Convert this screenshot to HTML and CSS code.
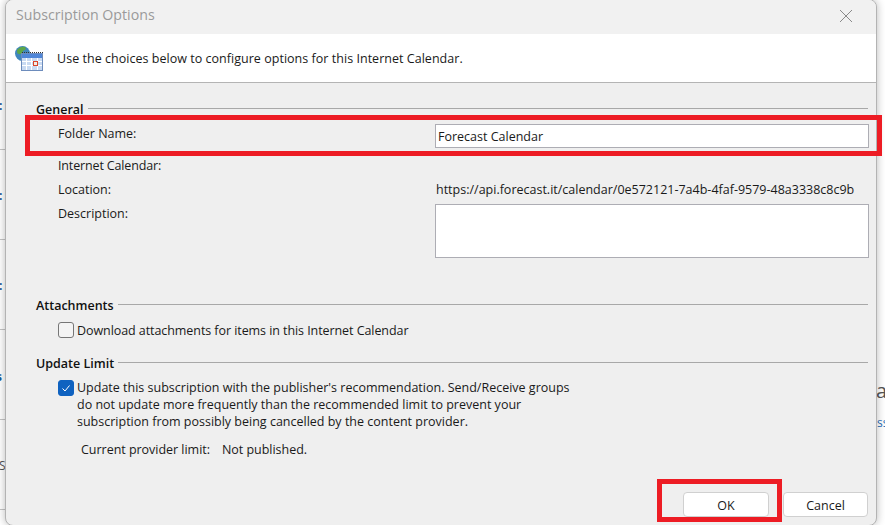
FILE: index.html
```html
<!DOCTYPE html>
<html lang="en">
<head>
  <meta charset="UTF-8">
  <title>Subscription Options</title>
  <link rel="stylesheet" href="styles.css">
</head>
<body>
  <!-- app window behind the dialog -->
  <div class="behind">
    <span class="frag c1">:</span>
    <span class="frag c2">:</span>
    <span class="frag c3">:</span>
    <span class="frag blue-s">s</span>
    <span class="frag grey-s">S</span>
    <span class="frag big-a">a</span>
    <span class="frag link-s">ss</span>
    <i class="rule r0"></i>
    <i class="rule r1"></i>
    <i class="rule r2"></i>
    <i class="rule r3"></i>
    <i class="rule r4"></i>
    <i class="rule r5"></i>
  </div>

  <div class="dialog">
    <div class="titlebar">
      <span class="title">Subscription Options</span>
      <svg class="close" width="14" height="14" viewBox="0 0 14 14"><path d="M1 1l12 12M13 1L1 13" stroke="#8a8a8a" stroke-width="1" fill="none"/></svg>
    </div>

    <div class="banner">
      <svg class="cal" width="28" height="25" viewBox="0 0 28 25">
        <circle cx="7.500" cy="7.500" r="7.500" fill="#3f86bd"/>
        <path d="M2 4c2-3 6-4 8-3 2 2 0 3-2 4-1 2-2 4-4 3-2 0-2-2-2-4z" fill="#5da648"/>
        <rect x="6.500" y="7.500" width="21" height="17" fill="#c9daf2" stroke="#6d8cbc"/>
        <rect x="7" y="8" width="20" height="4" fill="#4f86d8"/>
        <path d="M7 6.500h21" stroke="#333" stroke-dasharray="1 1"/>
        <path d="M7 15.500h20M7 19.500h20M11.500 12v12M16.500 12v12M22.500 12v12" stroke="#fff"/>
        <rect x="18.500" y="15.500" width="4" height="4" fill="#f5ebe2" stroke="#d9452b"/>
      </svg>
      <span>Use the choices below to configure options for this Internet Calendar.</span>
    </div>

    <div class="body">
      <div class="group-head first"><b>General</b><i></i></div>
      <div class="field-row name-row">
        <label>Folder Name:</label>
        <div class="input">Forecast Calendar</div>
      </div>
      <div class="field-row plain calendar-row"><label>Internet Calendar:</label></div>
      <div class="field-row plain"><label>Location:</label><span class="value">https://api.forecast.it/calendar/0e572121-7a4b-4faf-9579-48a3338c8c9b</span></div>
      <div class="field-row desc-row">
        <label>Description:</label>
        <div class="input area"></div>
      </div>

      <div class="group-head attach"><b>Attachments</b><i></i></div>
      <div class="check-row">
        <span class="check"></span>
        <span class="download">Download attachments for items in this Internet Calendar</span>
      </div>

      <div class="group-head update"><b>Update Limit</b><i></i></div>
      <div class="check-row">
        <span class="check on">
          <svg width="12" height="12" viewBox="0 0 12 12"><path d="M2.500 6.500l2.500 2.500 4.500-5.500" stroke="#fff" stroke-width="1" fill="none"/></svg>
        </span>
        <span class="long">Update this subscription with the publisher's recommendation. Send/Receive groups<br>do not update more frequently than the recommended limit to prevent your<br>subscription from possibly being cancelled by the content provider.</span>
      </div>
      <div class="provider"><span>Current provider limit:</span><span>Not published.</span></div>
    </div>

    <div class="buttons">
      <button class="ok">OK</button>
      <button class="cancel">Cancel</button>
    </div>
  </div>

  <!-- red annotation boxes -->
  <div class="mark mark-name"></div>
  <div class="mark mark-ok"></div>
</body>
</html>
```

FILE: styles.css
```css
html, body {
  width: 100%;
  height: 100%;
  padding: 0;
  margin: 0;
}

body {
  position: relative;
  overflow: hidden;
  background: #fff;
  font-family: "Open Sans", "Noto Sans", sans-serif;
  font-size: 12.5px;
  color: #1a1a1a;
}

/* stuff behind the dialog */
.frag {
  position: absolute;
  font-weight: 700;
  color: #1a5a9a;
  font-size: 12px;
  line-height: 14px;
}
.c1 { left: -1px; top: 99px; }
.c2 { left: -1px; top: 189px; }
.c3 { left: -1px; top: 279px; }
.blue-s { left: -4px; top: 370px; }
.grey-s { left: -1px; top: 459px; color: #555; font-weight: 400; }
.big-a { left: 876px; top: 379px; font-size: 20px; line-height: 24px; color: #555; font-weight: 400; }
.link-s { left: 877px; top: 416px; font-weight: 400; color: #2a70b8; }

.rule {
  position: absolute;
  left: 0;
  width: 5px;
  height: 1px;
  background: #c4c4c4;
}
.r0 { top: 59px; }
.r1 { top: 149px; }
.r2 { top: 239px; }
.r3 { top: 329px; }
.r4 { top: 419px; }
.r5 { top: 509px; }

.dialog {
  position: absolute;
  left: 5px;
  top: -1px;
  width: 872px;
  height: 527px;
  display: flex;
  flex-direction: column;
  box-sizing: border-box;
  overflow: hidden;
  background: #efefef;
  border: 1px solid #b3b3b3;
  border-radius: 8px;
  box-shadow: 0 0 9px rgba(0, 0, 0, .28);
}

.titlebar {
  height: 34px;
  flex: none;
  display: flex;
  align-items: center;
  justify-content: space-between;
  padding: 0 23px 2px 10px;
  box-sizing: border-box;
  background: #f1f1f1;
}
.title {
  font-size: 14.2px;
  line-height: 18px;
  margin-top: -2px;
  color: #9a9a9a;
}

.banner {
  height: 49px;
  flex: none;
  display: flex;
  align-items: center;
  box-sizing: border-box;
  padding: 0 0 0 9px;
  background: #fff;
  border-bottom: 1px solid #b4b4b4;
}
.banner span {
  margin-left: 14px;
  letter-spacing: .03px;
}

.body {
  flex: 1;
  padding-left: 30px;
  padding-right: 7px;
}

.group-head {
  display: flex;
  align-items: center;
  height: 16px;
  margin-right: 1px;
}
.group-head b { font-weight: 600; color: #111; }
.group-head i {
  flex: 1;
  height: 1px;
  margin: 0 0 2px 4px;
  background: #a8a8a8;
}
.group-head.first { margin-top: 18px; }
.group-head.attach { margin-top: 39px; }
.group-head.update { margin-top: 16px; }

.field-row {
  display: flex;
  padding-left: 22px;
}
.field-row label {
  width: 377px;
  flex: none;
  line-height: 16px;
}
.name-row { margin-top: 7px; }
.name-row label { margin-top: 2px; }
.calendar-row { margin-top: 5px; }
.calendar-row label { letter-spacing: -.15px; }
.plain { height: 24px; }
.field-row.plain label, .plain .value { line-height: 26px; }
.plain .value { margin-left: 1px; }
.desc-row { margin-top: 3px; }
.desc-row label { margin-top: 2px; }

.input {
  flex: 1;
  height: 24px;
  box-sizing: border-box;
  padding: 0 2px;
  line-height: 23px;
  background: #fff;
  border: 1px solid #adadb4;
}
.input.area { height: 54px; }

.check-row {
  display: flex;
  align-items: flex-start;
  padding-left: 22px;
  margin-top: 9px;
}
.check {
  width: 16px;
  height: 16px;
  flex: none;
  margin-right: 3px;
  box-sizing: border-box;
  border: 1px solid #767676;
  border-radius: 3px;
  background: #f4f4f4;
  display: flex;
  align-items: center;
  justify-content: center;
}
.check.on { background: #0f62c0; border-color: #0f62c0; }
.check-row > span:last-child { line-height: 17px; }
.download { letter-spacing: -.07px; }
.long { margin-top: -1px; }

.provider {
  display: flex;
  gap: 12px;
  padding-left: 45px;
  margin-top: 11px;
  line-height: 17px;
  letter-spacing: -.03px;
}

.buttons {
  flex: none;
  display: flex;
  justify-content: flex-end;
  gap: 14px;
  padding: 0 8px 8px 0;
}
.buttons button {
  height: 25px;
  padding: 2px 0 0;
  font: inherit;
  color: #1a1a1a;
  background: #fff;
  border: 1px solid #d0d0d0;
  border-radius: 4px;
}
.ok { width: 86px; }
.cancel { width: 85px; }

.mark {
  position: absolute;
  box-sizing: border-box;
  border: 5px solid #ed1c24;
}
.mark-name { left: 25px; top: 115px; width: 857px; height: 41px; }
.mark-ok { left: 657px; top: 479px; width: 125px; height: 43px; }
```
